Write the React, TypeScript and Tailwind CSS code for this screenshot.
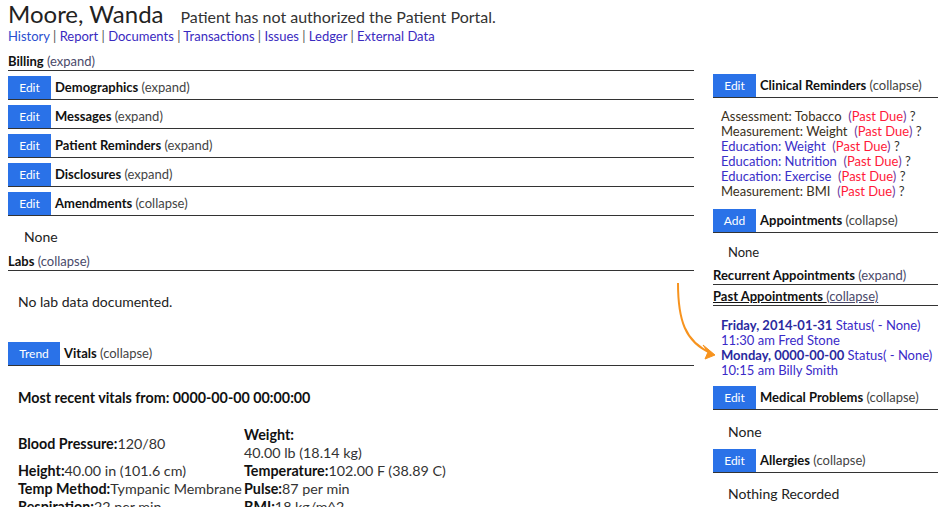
import React from "react";

const BTN = "bg-[#2a72e8] text-white text-[12px] flex items-center justify-center h-[23px] shrink-0";

function Row({ btn = "Edit", w = "w-[43px]", title, action }: { btn?: string; w?: string; title: string; action: string }) {
  return (
    <div className="flex items-center h-[24px] border-b border-[#333]">
      <div className={`${BTN} ${w}`}>{btn}</div>
      <div className="ml-[4px] pb-[2px] text-[13px] leading-[16px]">
        <span className="font-bold text-[#111]">{title}</span> <span className="text-[#444]">{action}</span>
      </div>
    </div>
  );
}

function Label({ title, action, underline = false }: { title: string; action: string; underline?: boolean }) {
  return (
    <div className="h-[18px] border-b border-[#333] text-[13px] leading-[16px]">
      <span className={`font-bold text-[#111] ${underline ? "underline" : ""}`}>{title} </span>
      <span className={`text-[#4a4a6a] ${underline ? "underline" : ""}`}>{action}</span>
    </div>
  );
}

function Reminder({ text, blue }: { text: string; blue?: boolean }) {
  return (
    <div>
      <span className={blue ? "text-[#3a2fc8]" : "text-[#3a3020]"}>{text}</span>{"  "}
      <span className="text-[#6a3aa0]">(</span>
      <span className="text-[#ff1a3a]">Past Due</span>
      <span className="text-[#6a3aa0]">)</span> <span className="text-[#333]">?</span>
    </div>
  );
}

export default function App() {
  const links = ["History", "Report", "Documents", "Transactions", "Issues", "Ledger", "External Data"];
  return (
    <div className="relative w-[951px] h-[507px] overflow-hidden bg-white pl-[8px] text-[#222]" style={{ fontFamily: "Lato, 'Noto Sans', sans-serif" }}>
      <div className="flex items-baseline h-[28px]">
        <span className="text-[24px] leading-[28px] text-[#222]">Moore, Wanda</span>
        <span className="ml-[17px] text-[16px] text-[#333]">Patient has not authorized the Patient Portal.</span>
      </div>
      <div className="text-[13px] leading-[16px]">
        {links.map((l, i) => (
          <span key={l}>
            <span className={i === 0 ? "text-[#2b4fcf]" : "text-[#3a2ac0]"}>{l}</span>
            {i < links.length - 1 && <span className="text-[#555]"> | </span>}
          </span>
        ))}
      </div>
      <div className="flex mt-[9px] gap-[19px]">
        {/* Left column */}
        <div className="w-[686px] shrink-0">
          <Label title="Billing" action="(expand)" />
          <div className="mt-[5px]"><Row title="Demographics" action="(expand)" /></div>
          <div className="mt-[5px]"><Row title="Messages" action="(expand)" /></div>
          <div className="mt-[5px]"><Row title="Patient Reminders" action="(expand)" /></div>
          <div className="mt-[5px]"><Row title="Disclosures" action="(expand)" /></div>
          <div className="mt-[5px]"><Row title="Amendments" action="(collapse)" /></div>
          <div className="mt-[12px] pl-[16px] text-[14px] leading-[18px] text-[#222]">None</div>
          <div className="mt-[7px]"><Label title="Labs" action="(collapse)" /></div>
          <div className="mt-[22px] pl-[10px] text-[14px] leading-[18px] text-[#222]">No lab data documented.</div>
          <div className="mt-[31px]"><Row btn="Trend" w="w-[52px]" title="Vitals" action="(collapse)" /></div>
          <div className="mt-[23px] pl-[10px] text-[14.3px] leading-[18px] font-bold text-[#111]">Most recent vitals from: 0000-00-00 00:00:00</div>
          <div className="mt-[19px] pl-[10px] grid grid-cols-[226px_1fr] items-center text-[14.3px] leading-[18px] text-[#333]">
            <div><span className="font-bold text-[#111]">Blood Pressure:</span>120/80</div>
            <div><span className="font-bold text-[#111]">Weight:</span><br />40.00 lb (18.14 kg)</div>
            <div><span className="font-bold text-[#111]">Height:</span>40.00 in (101.6 cm)</div>
            <div><span className="font-bold text-[#111]">Temperature:</span>102.00 F (38.89 C)</div>
            <div className="whitespace-nowrap"><span className="font-bold text-[#111]">Temp Method:</span>Tympanic Membrane</div>
            <div><span className="font-bold text-[#111]">Pulse:</span>87 per min</div>
            <div><span className="font-bold text-[#111]">Respiration:</span>22 per min</div>
            <div><span className="font-bold text-[#111]">BMI:</span>18 kg/m^2</div>
          </div>
        </div>
        {/* Right column */}
        <div className="w-[225px] shrink-0 pt-[21px]">
          <Row title="Clinical Reminders" action="(collapse)" />
          <div className="mt-[11px] pl-[8px] text-[13px] leading-[15px] whitespace-pre">
            <Reminder text="Assessment: Tobacco" />
            <Reminder text="Measurement: Weight" />
            <Reminder text="Education: Weight" blue />
            <Reminder text="Education: Nutrition" blue />
            <Reminder text="Education: Exercise" blue />
            <Reminder text="Measurement: BMI" />
          </div>
          <div className="mt-[10px]"><Row btn="Add" title="Appointments" action="(collapse)" /></div>
          <div className="mt-[11px] pl-[15px] text-[13px] leading-[16px] text-[#222]">None</div>
          <div className="mt-[7px]"><Label title="Recurrent Appointments" action="(expand)" /></div>
          <div className="mt-[3px]"><Label title="Past Appointments" action="(collapse)" underline /></div>
          <div className="mt-[12px] pl-[8px] text-[13px] leading-[15px] text-[#3a2ac8]">
            <div><span className="font-bold text-[#2a2aa0]">Friday, 2014-01-31</span> Status( - None)</div>
            <div>11:30 am Fred Stone</div>
            <div><span className="font-bold text-[#2a2aa0]">Monday, 0000-00-00</span> Status( - None)</div>
            <div>10:15 am Billy Smith</div>
          </div>
          <div className="mt-[8px]"><Row title="Medical Problems" action="(collapse)" /></div>
          <div className="mt-[13px] pl-[15px] text-[14px] leading-[18px] text-[#222]">None</div>
          <div className="mt-[8px]"><Row title="Allergies" action="(collapse)" /></div>
          <div className="mt-[12px] pl-[15px] text-[14px] leading-[18px] text-[#222]">Nothing Recorded</div>
        </div>
      </div>
      <svg className="absolute left-[670px] top-[280px]" width="60" height="85" viewBox="0 0 60 85">
        <path d="M8 3 C 8 40, 15 62, 41 73" fill="none" stroke="#f7931e" strokeWidth="2" />
        <path d="M45 75 L33 65 L38 72 L35 79 Z" fill="#f7931e" stroke="#f7931e" strokeWidth="1" strokeLinejoin="round" />
      </svg>
    </div>
  );
}
